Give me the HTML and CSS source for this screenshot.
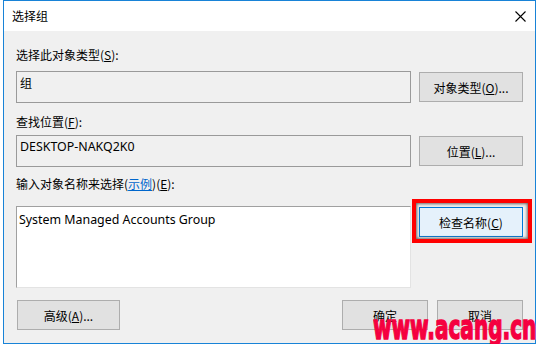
FILE: index.html
```html
<!DOCTYPE html>
<html lang="zh-CN">
<head>
    <meta charset="UTF-8">
    <meta name="viewport" content="width=device-width, initial-scale=1.0">
    <title>选择组</title>
    <link rel="stylesheet" href="styles.css">
</head>
<body>

    <div class="window">
        <div class="titlebar">
            <span class="title">选择组</span>
            <span class="close">
                <svg width="11" height="11" viewBox="0 0 11 11">
                    <path d="M0.5 0.5 L10.5 10.5 M10.5 0.5 L0.5 10.5" stroke="#000" stroke-width="1.1" fill="none"/>
                </svg>
            </span>
        </div>

        <div class="content">
            <div class="label label-first">选择此对象类型(<u>S</u>):</div>
            <div class="row">
                <div class="field">组</div>
                <button class="btn">对象类型(<u>O</u>)...</button>
            </div>

            <div class="label label-second">查找位置(<u>F</u>):</div>
            <div class="row">
                <div class="field latin">DESKTOP-NAKQ2K0</div>
                <button class="btn">位置(<u>L</u>)...</button>
            </div>

            <div class="label label-third">输入对象名称来选择(<a class="link">示例</a>)(<u>E</u>):</div>
            <div class="row row-top">
                <div class="names latin">System Managed Accounts Group</div>
                <div class="check-wrap">
                    <button class="btn btn-check">检查名称(<u>C</u>)</button>
                    <span class="highlight"></span>
                </div>
            </div>

            <div class="footer">
                <button class="btn btn-advanced">高级(<u>A</u>)...</button>
                <div class="footer-right">
                    <button class="btn btn-small">确定</button>
                    <button class="btn btn-small">取消</button>
                </div>
            </div>
        </div>

        <div class="watermark">www.acang.cn</div>
    </div>

</body>
</html>
```

FILE: styles.css
```css
html, body {
    margin: 0;
    padding: 0;
    background: #ffffff;
    overflow: hidden;
}
body {
    font-family: "Noto Sans CJK SC", "Noto Sans", sans-serif;
    font-size: 12px;
    color: #000;
}
.window {
    position: relative;
    margin-left: 3px;
    width: 531px;
    height: 342px;
    border: 1px solid #1883d7;
    background: #f0f0f0;
}
.titlebar {
    height: 30px;
    background: #ffffff;
    display: flex;
    align-items: center;
    justify-content: space-between;
    padding-left: 8px;
}
.title {
    font-size: 12px;
    line-height: 16px;
}
.close {
    width: 30px;
    height: 30px;
    display: flex;
    align-items: center;
    justify-content: center;
}
.content {
    padding: 16px 12px 0 12px;
}
.label {
    line-height: 16px;
    height: 16px;
}
.label-first {
    margin-bottom: 8px;
}
.label-second {
    margin-top: 11px;
    margin-bottom: 5px;
}
.label-third {
    margin-top: 9px;
    margin-bottom: 14px;
}
u {
    text-decoration: underline;
    text-underline-offset: 1px;
}
.link {
    color: #0066cc;
    text-decoration: underline;
}
.row {
    display: grid;
    grid-template-columns: 1fr 104px;
    column-gap: 8px;
    align-items: center;
}
.row-top {
    align-items: start;
}
.latin {
    font-family: "Noto Sans", "Noto Sans CJK SC", sans-serif;
    font-size: 12.4px;
}
.field {
    height: 24px;
    padding: 3px 3px 3px 3px;
    line-height: 16px;
    border: 1px solid #9a9a9a;
    background: #f0f0f0;
}
.names {
    height: 70px;
    padding: 5px 2px;
    line-height: 16px;
    background: #ffffff;
    border-top: 1px solid #a0a0a0;
    border-left: 1px solid #a0a0a0;
    border-right: 1px solid #e3e3e3;
    border-bottom: 1px solid #e3e3e3;
}
.btn {
    height: 30px;
    padding: 0;
    background: #e1e1e1;
    border: 1px solid #adadad;
    font-family: "Noto Sans CJK SC", "Noto Sans", sans-serif;
    font-size: 12px;
    color: #000;
    text-align: center;
}
.row .btn {
    width: 104px;
}
.check-wrap {
    position: relative;
    margin-top: 1px;
}
.btn-check {
    display: block;
    background: #e5f1fb;
    border: 1px solid #0078d7;
}
.highlight {
    position: absolute;
    left: -7px;
    top: -8px;
    width: 112px;
    height: 36px;
    border: 4px solid #ff0000;
    box-shadow: inset 0 0 3px 1px #6a6a6a;
}
.footer {
    margin-top: 12px;
    display: flex;
    justify-content: space-between;
}
.btn-advanced {
    margin-left: 1px;
    width: 103px;
}
.footer-right {
    display: flex;
    gap: 9px;
}
.btn-small {
    width: 86px;
}
.watermark {
    position: absolute;
    left: 369px;
    top: 309px;
    font-family: "DejaVu Sans", sans-serif;
    font-weight: bold;
    font-size: 34px;
    line-height: 34px;
    color: #f5003f;
    -webkit-text-stroke: 1.6px #f5003f;
    white-space: nowrap;
    transform: scaleX(0.59);
    transform-origin: left top;
}
```
